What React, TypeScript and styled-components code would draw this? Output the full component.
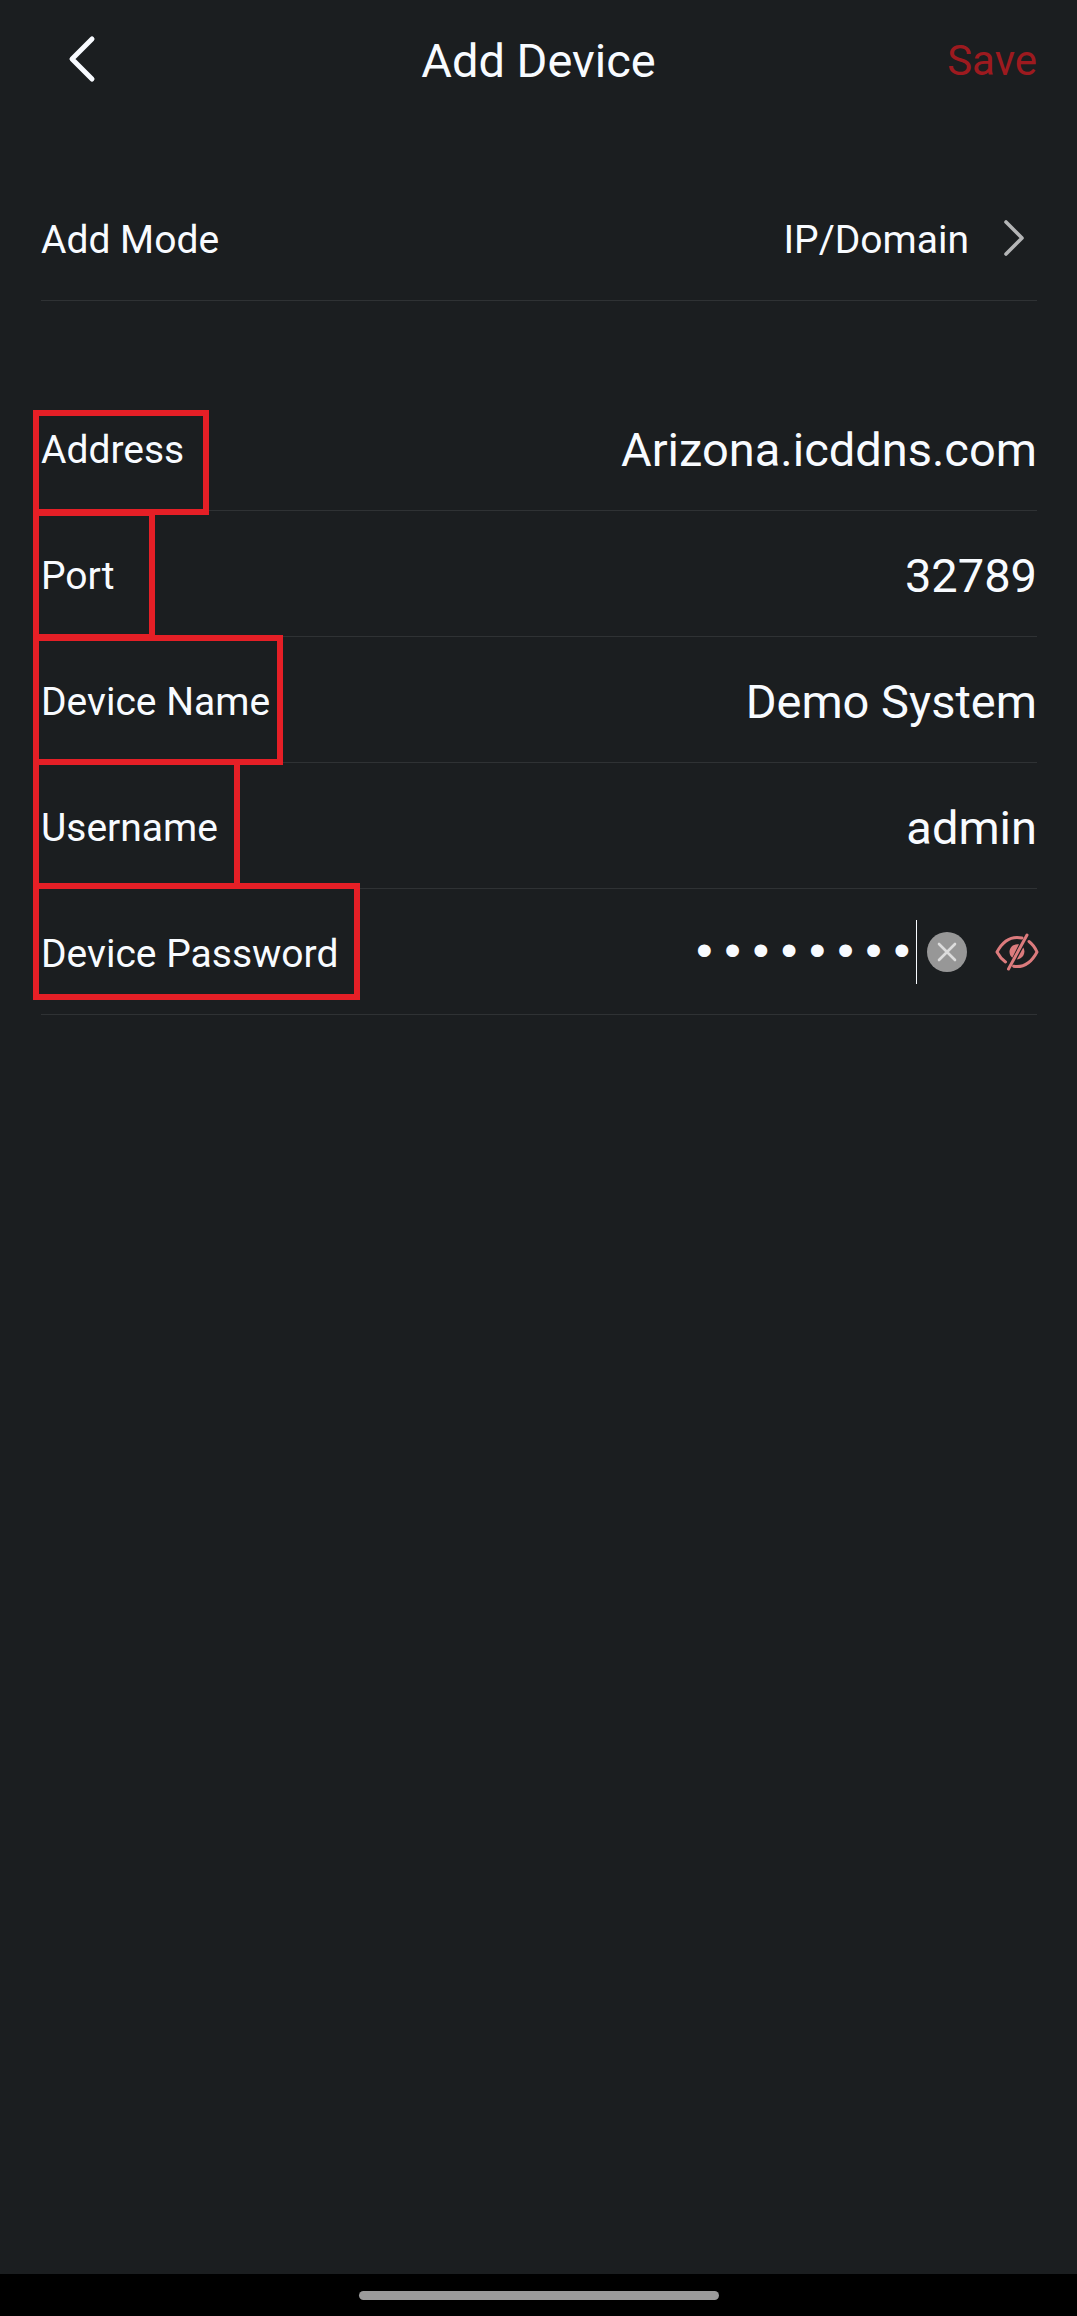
import React, { useState } from "react";
import styled, { createGlobalStyle } from "styled-components";

const color = {
  page: "#1b1e20",
  text: "#f8fbff",
  line: "#2f3234",
  save: "#9d1a1f",
  mark: "#e51f26",
  muted: "#b4b5b6",
  badge: "#979797",
  eye: "#dc7b7d",
};

const GlobalStyle = createGlobalStyle`
  * { box-sizing: border-box; }
  body {
    margin: 0;
    background: ${color.page};
    color: ${color.text};
    font-family: Roboto, "Liberation Sans", sans-serif;
  }
  button, input { font: inherit; color: inherit; }
`;

const Screen = styled.div`
  min-height: 100vh;
  display: flex;
  flex-direction: column;
`;

const Header = styled.header`
  display: grid;
  grid-template-columns: 1fr auto 1fr;
  align-items: center;
  height: 121px;
  padding: 0 40px;
`;

const Title = styled.h1`
  margin: 0;
  font-size: 47px;
  font-weight: 400;
  line-height: 56px;
`;

const PlainButton = styled.button`
  display: flex;
  align-items: center;
  justify-content: center;
  padding: 0;
  border: 0;
  background: none;
  cursor: pointer;
`;

const BackButton = styled(PlainButton)`
  justify-self: start;
  width: 84px;
  height: 80px;
  padding-bottom: 4px;
`;

const SaveButton = styled(PlainButton)`
  justify-self: end;
  color: ${color.save};
  font-size: 42px;
  line-height: 56px;
`;

const Form = styled.form`
  flex: 1;
  display: flex;
  flex-direction: column;
  gap: 84px;
  padding: 54px 40px 0 41px;
`;

const Group = styled.div`
  display: flex;
  flex-direction: column;
`;

const Row = styled.div`
  position: relative;
  display: flex;
  align-items: center;
  height: 126px;
  padding-top: 4px;
  border-bottom: 1px solid ${color.line};
`;

const ModeRow = styled(Row).attrs({ as: "button", type: "button" })`
  width: 100%;
  justify-content: space-between;
  padding: 4px 10px 0 0;
  border-width: 0 0 1px;
  background: none;
  font-size: 39px;
  line-height: 48px;
  cursor: pointer;
`;

const ModeValue = styled.span`
  display: flex;
  align-items: center;
  gap: 32px;
`;

const Chevron = styled.svg`
  margin-bottom: 4px;
`;

const Label = styled.label`
  flex: none;
  font-size: 39px;
  line-height: 48px;
`;

const Field = styled.input`
  flex: 1;
  min-width: 0;
  height: 64px;
  padding: 0;
  border: 0;
  outline: 0;
  background: none;
  font-size: 47px;
  text-align: right;
`;

const PasswordField = styled(Field)`
  font-family: "Liberation Mono", monospace;
`;

const Actions = styled.div`
  display: flex;
  align-items: center;
  padding-bottom: 4px;
`;

const Caret = styled.span`
  width: 1px;
  height: 64px;
  background: ${color.text};
`;

const ClearButton = styled(PlainButton)`
  width: 40px;
  height: 40px;
  margin: 0 28px 0 10px;
  border-radius: 50%;
  background: ${color.badge};
`;

const EyeButton = styled(PlainButton)`
  margin-right: -2px;
`;

/* Red outline laid over a row's label. */
const Mark = styled.span<{ $top: number; $width: number; $height: number }>`
  position: absolute;
  left: -8px;
  top: ${(p) => p.$top}px;
  width: ${(p) => p.$width}px;
  height: ${(p) => p.$height}px;
  border: 6px solid ${color.mark};
  pointer-events: none;
`;

const NavBar = styled.footer`
  display: flex;
  justify-content: center;
  height: 42px;
  padding-top: 17px;
  background: #000;
`;

const NavPill = styled.span`
  width: 360px;
  height: 9px;
  border-radius: 5px;
  background: #9b9b9b;
`;

const fields = [
  { id: "address", label: "Address", value: "Arizona.icddns.com", mark: [25, 176, 105] },
  { id: "port", label: "Port", value: "32789", mark: [-1, 122, 130] },
  { id: "name", label: "Device Name", value: "Demo System", mark: [-2, 250, 130] },
  { id: "user", label: "Username", value: "admin", mark: [-4, 207, 130] },
];

export default function App() {
  const [password, setPassword] = useState("password");
  const [shown, setShown] = useState(false);

  return (
    <Screen>
      <GlobalStyle />
      <Header>
        <BackButton type="button" aria-label="Back">
          <svg width="28" height="48" viewBox="0 0 28 48" fill="none" stroke={color.text} strokeWidth="5" strokeLinecap="round" strokeLinejoin="round">
            <path d="M24 4 4 24l20 20" />
          </svg>
        </BackButton>
        <Title>Add Device</Title>
        <SaveButton type="submit" form="device">Save</SaveButton>
      </Header>

      <Form id="device" autoComplete="off" onSubmit={(e) => e.preventDefault()}>
        <Group>
          <ModeRow>
            <span>Add Mode</span>
            <ModeValue>
              IP/Domain
              <Chevron width="26" height="38" viewBox="0 0 26 38" fill="none" stroke={color.muted} strokeWidth="3.6" strokeLinecap="round" strokeLinejoin="round">
                <path d="m5 3 16 16L5 35" />
              </Chevron>
            </ModeValue>
          </ModeRow>
        </Group>

        <Group>
          {fields.map(({ id, label, value, mark }) => (
            <Row key={id}>
              <Label htmlFor={id}>{label}</Label>
              <Field id={id} type="text" defaultValue={value} />
              <Mark $top={mark[0]} $width={mark[1]} $height={mark[2]} />
            </Row>
          ))}
          <Row>
            <Label htmlFor="password">Device Password</Label>
            <PasswordField
              id="password"
              type={shown ? "text" : "password"}
              value={password}
              onChange={(e) => setPassword(e.target.value)}
            />
            <Actions>
              <Caret />
              <ClearButton type="button" aria-label="Clear password" onClick={() => setPassword("")}>
                <svg width="20" height="20" viewBox="0 0 20 20" stroke="#dcdcdc" strokeWidth="2.6" strokeLinecap="round">
                  <path d="m2 2 16 16M18 2 2 18" />
                </svg>
              </ClearButton>
              <EyeButton type="button" aria-label="Show password" onClick={() => setShown(!shown)}>
                <svg width="44" height="38" viewBox="0 0 44 38" fill="none" stroke={color.eye} strokeWidth="3" strokeLinecap="round" strokeLinejoin="round">
                  <path d="M27 5C25 4.500 23.500 4.400 22 4.400 13 4.400 6.500 10.500 2 19c2.400 4.500 5 7.500 8.500 10" />
                  <path d="M34 8.500c3.400 2.500 6 6 8 10.500C37.500 27.500 31 33.600 22 33.600c-1.400 0-2.200-.1-3.400-.4" />
                  <path d="M32 2 13.500 36" />
                  <path d="M24 11.300c-5.500-1-9.500 3-9.500 7.400 0 2.600 1 4.600 2.800 6z" fill={color.eye} stroke="none" />
                  <path d="M28.300 14.500c3 5-.3 11.400-6.500 11.900z" fill={color.eye} stroke="none" />
                </svg>
              </EyeButton>
            </Actions>
            <Mark $top={-6} $width={327} $height={117} />
          </Row>
        </Group>
      </Form>

      <NavBar>
        <NavPill />
      </NavBar>
    </Screen>
  );
}
